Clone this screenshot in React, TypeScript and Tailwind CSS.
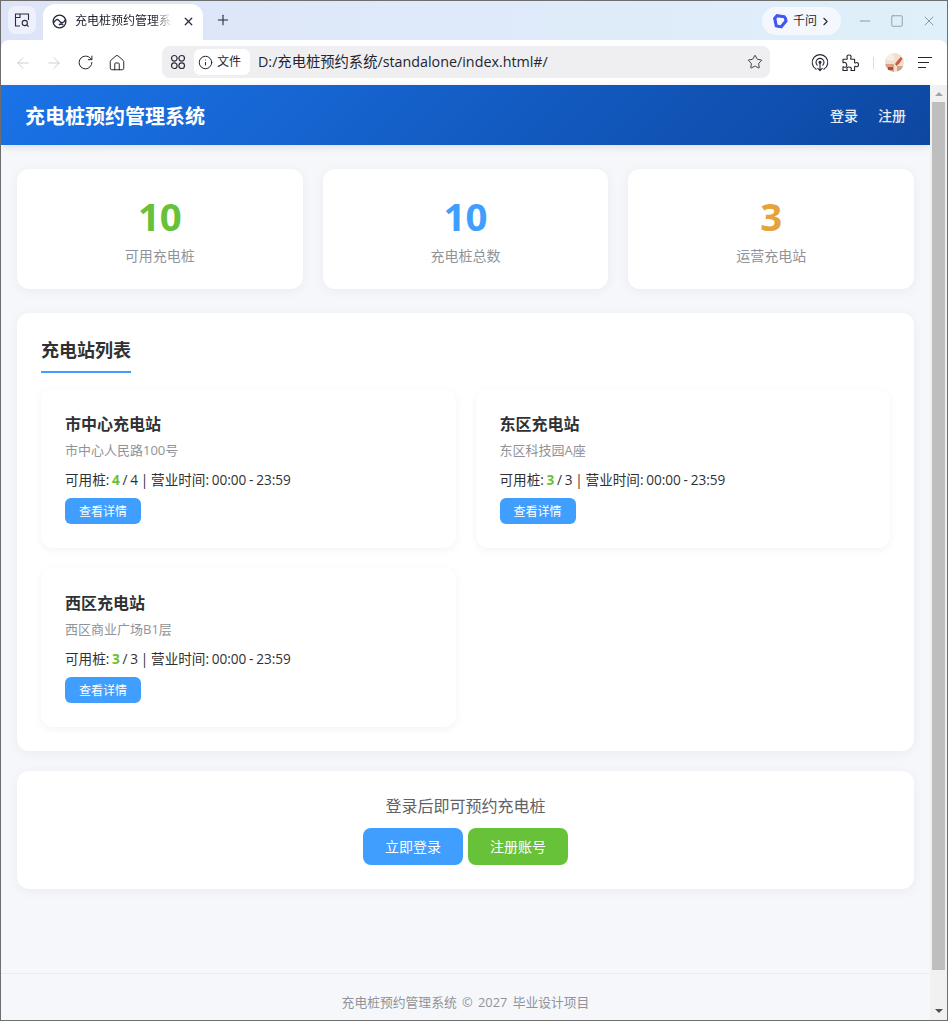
import React from 'react'
import { ArrowLeft, ArrowRight, RotateCw, House, Star, Info, Plus, X, Minus, Square, ChevronRight } from 'lucide-react'

const FONT = "font-['Open_Sans','Noto_Sans_CJK_SC',sans-serif]"

const stats = [
  { value: '10', label: '可用充电桩', color: 'text-[#67c23a]' },
  { value: '10', label: '充电桩总数', color: 'text-[#409eff]' },
  { value: '3', label: '运营充电站', color: 'text-[#e6a23c]' },
]

const stations = [
  { name: '市中心充电站', addr: '市中心人民路100号', free: 4, total: 4 },
  { name: '东区充电站', addr: '东区科技园A座', free: 3, total: 3 },
  { name: '西区充电站', addr: '西区商业广场B1层', free: 3, total: 3 },
]

const BrowserChrome = () => {
  return (
    <div className="shrink-0 bg-gradient-to-r from-[#dde4f8] to-[#dff0fa]">
      {/* TABS */}
      <div className="h-[39px] flex items-end pl-[7px] pr-[10px]">
        <div className="w-[28px] h-[28px] mb-[6px] rounded-lg bg-[#eef1fc] flex items-center justify-center">
          <svg width="16" height="16" viewBox="0 0 16 16" fill="none" stroke="#2a2d3a" strokeWidth="1.1">
            <path d="M6 14H1.5V2h13v6" />
            <path d="M1.5 5.5H6V2" />
            <circle cx="10.8" cy="11" r="2.6" />
            <path d="M12.8 13l1.8 1.6" />
          </svg>
        </div>
        <div className="ml-[7px] w-[160px] h-[36px] rounded-t-xl bg-white flex items-center pl-[9px] pr-[8px] pb-[2px]">
          <svg width="15" height="15" viewBox="0 0 16 16" fill="none" stroke="#20263a" strokeWidth="1.4">
            <circle cx="8" cy="8" r="6.8" />
            <path d="M1.6 9.6C4 5 6 5 8 7.6s4.5 2.4 6.3-1.6" />
            <path d="M7.4 11.6c1.5-1.2 3.2-1.2 4.6-.2" />
          </svg>
          <span className="ml-[8px] w-[98px] overflow-hidden whitespace-nowrap text-[12px] text-[#23262f] [mask-image:linear-gradient(to_right,black_80%,transparent)]">充电桩预约管理系统</span>
          <X size={13} strokeWidth={2.4} className="ml-auto text-[#2a2d3a]" />
        </div>
        <Plus size={16} strokeWidth={1.6} className="ml-[12px] mb-[12px] text-[#23262f]" />
        <div className="ml-auto mb-[5px] w-[79px] h-[28px] rounded-full bg-[#f4f8fe] flex items-center pl-[10px]">
          <svg width="16" height="16" viewBox="0 0 16 16" fill="none" stroke="#4355f5" strokeWidth="3.1" strokeLinecap="round">
            <path d="M2.6 5.400L5 2.600l7.400 1.200" />
            <path d="M13.400 5.200l.6 2.800-4.800 5.800" />
            <path d="M7 13.400l-2.800-.6L3 6.600" />
          </svg>
          <span className="ml-[5px] text-[12px] text-[#23262f]">千问</span>
          <ChevronRight size={13} className="ml-[2px] text-[#23262f]" />
        </div>
        <div className="mb-[11px] ml-[16px] flex items-center gap-[16px] text-[#7d8088]">
          <Minus size={16} strokeWidth={1.2} />
          <Square size={14} strokeWidth={1.2} className="mx-[1px]" />
          <X size={16} strokeWidth={1.2} />
        </div>
      </div>
      {/* TOOLBAR */}
      <div className="h-[45px] rounded-t-lg bg-white flex items-center pl-[13px] pr-[15px]">
        <ArrowLeft size={18} strokeWidth={1.2} className="text-[#c8cad0]" />
        <ArrowRight size={18} strokeWidth={1.2} className="ml-[13px] text-[#c8cad0]" />
        <RotateCw size={17} strokeWidth={1.4} className="ml-[14px] text-[#23262f]" />
        <House size={18} strokeWidth={1.3} className="ml-[14px] text-[#23262f]" />
        <div className="ml-[36px] mb-[1px] w-[608px] h-[32px] rounded-lg bg-[#efeff2] flex items-center pl-[8px] pr-[7px]">
          <svg width="16" height="16" viewBox="0 0 16 16" fill="none" stroke="#2a2d3a" strokeWidth="1.2">
            <circle cx="4.3" cy="4.3" r="2.8" />
            <circle cx="11.7" cy="4.3" r="2.8" />
            <circle cx="4.3" cy="11.7" r="2.8" />
            <circle cx="11.7" cy="11.7" r="2.8" />
          </svg>
          <div className="ml-[8px] w-[56px] h-[26px] rounded-md bg-white flex items-center pl-[4px]">
            <Info size={15} strokeWidth={1.6} className="text-[#23262f]" />
            <span className="ml-[4px] text-[12px] text-[#23262f]">文件</span>
          </div>
          <span className="ml-[8px] text-[14.3px] text-[#23262f]">D:/充电桩预约系统/standalone/index.html#/</span>
          <Star size={16} strokeWidth={1.3} className="ml-auto text-[#23262f]" />
        </div>
        {/* cast */}
        <svg className="ml-[41px]" width="18" height="18" viewBox="0 0 18 18" fill="none" stroke="#23262f" strokeWidth="1.1" strokeLinecap="round" strokeLinejoin="round">
          <path d="M5.2 15.2A7.800 7.800 0 1 1 12.800 15.200" />
          <path d="M6.200 11.200a4 4 0 1 1 5.600 0" />
          <circle cx="9" cy="8.300" r="1" fill="#23262f" />
          <path d="M9 9.500v7M6.800 14.400L9 16.600l2.200-2.200" />
        </svg>
        {/* extensions */}
        <svg className="ml-[12px]" width="18" height="18" viewBox="0 0 18 18" fill="none" stroke="#23262f" strokeWidth="1.1" strokeLinejoin="round">
          <path d="M2 5.200h3.600c.6 0 .9-.4.700-1-.2-.5-.4-.8-.4-1.300C5.900 1.800 6.800 1 8 1s2.100.8 2.100 1.900c0 .5-.2.8-.4 1.300-.2.600.1 1 .7 1h3.200v3c0 .6.400.9 1 .7.500-.2.800-.4 1.200-.4 1 0 1.700.9 1.700 2.100s-.7 2.100-1.700 2.100c-.4 0-.7-.2-1.200-.4-.6-.2-1 .1-1 .7v3.500H9.900c-.1-.5.100-.8.300-1.200.2-.5.200-1-.1-1.400-.4-.6-1.200-.9-2-.9s-1.600.3-2 .9c-.3.4-.3.900-.1 1.400.2.400.4.700.3 1.200H2v-3.600c.5 0 .8.200 1.200.3 1.300.4 2.600-.4 2.600-1.900S4.500 7.900 3.200 8.300c-.4.100-.7.300-1.200.3z" />
        </svg>
        <div className="ml-[14px] w-px h-[12px] bg-[#dcdde0]" />
        {/* avatar */}
        <svg className="ml-[11px] rounded-full" width="19" height="19" viewBox="0 0 19 19">
          <rect width="19" height="19" fill="#efe0cf" />
          <path d="M0 11h9v8H0z" fill="#dfa184" />
          <path d="M2 4.500a3.500 3.500 0 0 1 7 0v3H2z" fill="#f5efe6" />
          <path d="M10 11c2-3 3.500-5 6-7l1.500 1.500c-1.500 3-3.500 6-6 7.500z" fill="#cf5a48" />
          <path d="M12 13h7v6h-7z" fill="#c9a98c" />
          <path d="M3 14h5v3H3z" fill="#b9483a" />
        </svg>
        <div className="ml-[14px] flex flex-col gap-[4px]">
          <div className="w-[14px] h-px bg-[#23262f]" />
          <div className="w-[11px] h-px bg-[#23262f]" />
          <div className="w-[8px] h-px bg-[#23262f]" />
        </div>
      </div>
    </div>
  )
}

const Scrollbar = () => {
  return (
    <div className="w-[17px] shrink-0 bg-[#f1f1f1] flex flex-col items-center">
      <div className="h-[17px] flex items-center justify-center">
        <div className="w-0 h-0 border-x-[4px] border-x-transparent border-b-[4px] border-b-[#a3a3a3]" />
      </div>
      <div className="w-[13px] h-[868px] bg-[#bebebe]" />
      <div className="flex-1 flex items-end pb-[7px]">
        <div className="w-0 h-0 border-x-[4px] border-x-transparent border-t-[4px] border-t-[#505050]" />
      </div>
    </div>
  )
}

const StationCard = ({ s }: { s: (typeof stations)[number] }) => {
  return (
    <div className="h-[159px] px-[24px] pt-[23px] rounded-xl bg-white shadow-[0_2px_8px_rgba(0,0,0,0.05)]">
      <h3 className="text-[16px] leading-[24px] font-semibold text-[#303133]">{s.name}</h3>
      <p className="mt-[4px] text-[13px] leading-[20px] text-[#909399]">{s.addr}</p>
      <p className="mt-[10px] text-[13.6px] leading-[20px] [word-spacing:-0.8px] text-[#303133]">
        可用桩: <span className="font-bold text-[#67c23a]">{s.free}</span> / {s.total} | 营业时间: 00:00 - 23:59
      </p>
      <button className="block mt-[8px] w-[76px] h-[26px] pt-[2px] rounded-md bg-[#409eff] text-white text-[12px]">查看详情</button>
    </div>
  )
}

export default function App() {
  return (
    <div className={`w-[948px] h-[1021px] overflow-hidden border border-[#6e6e6e] bg-[#f5f7fa] flex flex-col ${FONT}`}>
      <BrowserChrome />
      <div className="flex-1 min-h-0 flex">
        <div className="flex-1 min-w-0 flex flex-col">
          {/* HEADER */}
          <header className="h-[60px] shrink-0 flex items-center justify-between pl-[24px] pr-[24px] bg-[linear-gradient(135deg,#1a73e8,#0d47a1)] shadow-[0_2px_8px_rgba(0,0,0,0.1)]">
            <h1 className="pt-[3px] text-[20px] font-bold text-white">充电桩预约管理系统</h1>
            <nav className="pt-[1px] flex gap-[20px] text-[14px] font-medium text-white/90">
              <span>登录</span>
              <span>注册</span>
            </nav>
          </header>
          <main className="flex-1 pt-[24px] px-[16px]">
            {/* STATS */}
            <div className="grid grid-cols-3 gap-[20px]">
              {stats.map((st) => (
                <div key={st.label} className="h-[120px] rounded-xl bg-white shadow-[0_2px_12px_rgba(0,0,0,0.05)] flex flex-col items-center pt-[23px]">
                  <div className={`text-[38.4px] leading-[48px] font-bold ${st.color}`}>{st.value}</div>
                  <div className="mt-[6px] text-[14px] leading-[20px] text-[#909399]">{st.label}</div>
                </div>
              ))}
            </div>
            {/* LIST */}
            <section className="mt-[24px] h-[438px] p-[24px] rounded-xl bg-white shadow-[0_2px_12px_rgba(0,0,0,0.05)]">
              <h2 className="inline-block h-[36px] border-b-2 border-[#409eff] text-[18px] leading-[26px] font-semibold text-[#303133]">充电站列表</h2>
              <div className="mt-[16px] grid grid-cols-2 gap-[20px]">
                {stations.map((s) => (
                  <StationCard key={s.name} s={s} />
                ))}
              </div>
            </section>
            {/* LOGIN */}
            <section className="mt-[20px] h-[118px] rounded-xl bg-white shadow-[0_2px_12px_rgba(0,0,0,0.05)] flex flex-col items-center pt-[23px]">
              <p className="text-[16px] leading-[24px] text-[#606266]">登录后即可预约充电桩</p>
              <div className="mt-[10px] flex gap-[5px]">
                <button className="w-[100px] h-[37px] rounded-lg bg-[#409eff] text-white text-[14px]">立即登录</button>
                <button className="w-[100px] h-[37px] rounded-lg bg-[#67c23a] text-white text-[14px]">注册账号</button>
              </div>
            </section>
          </main>
          {/* FOOTER */}
          <footer className="h-[47px] shrink-0 border-t border-[#e9ebf0] pt-[18px] text-center text-[12.8px] leading-[20px] [word-spacing:2px] text-[#909399]">
            充电桩预约管理系统 © 2027 毕业设计项目
          </footer>
        </div>
        <Scrollbar />
      </div>
    </div>
  )
}
